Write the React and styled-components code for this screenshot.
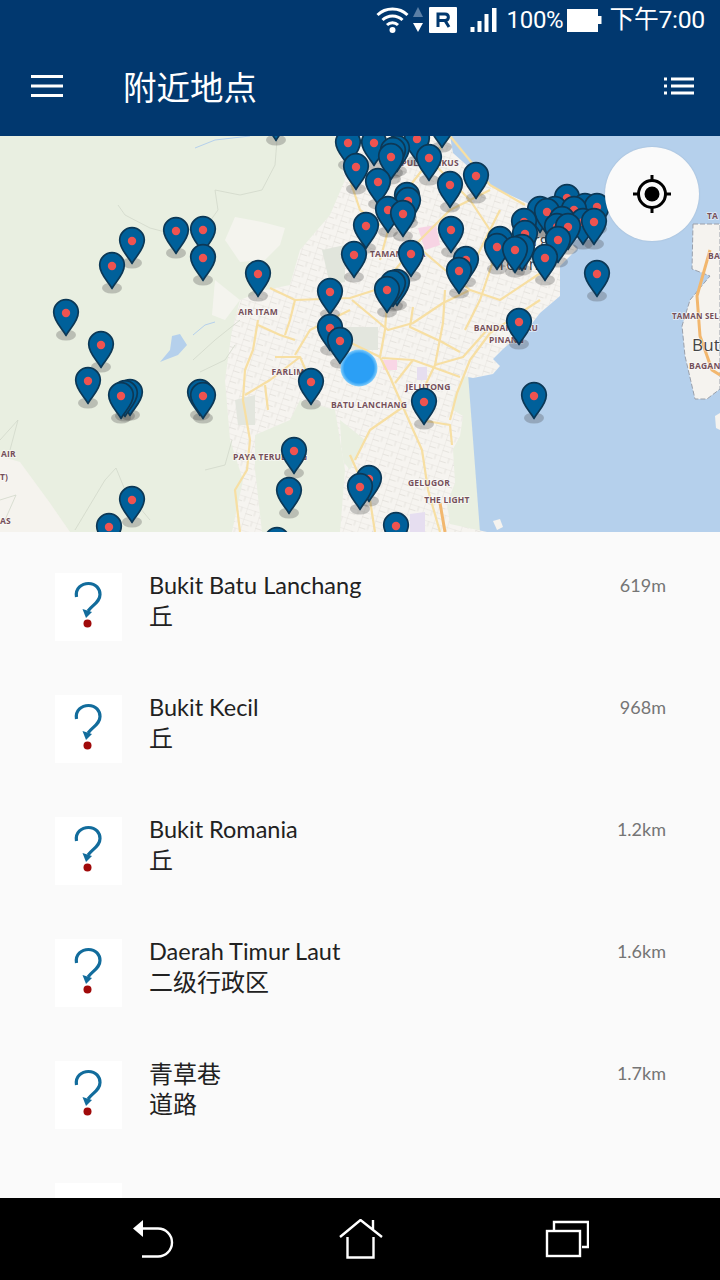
import React from 'react';
import styled, { createGlobalStyle } from 'styled-components';

const GlobalStyle = createGlobalStyle`
  html, body { margin: 0; padding: 0; background: #000; }
  * { box-sizing: border-box; }
`;

const CJK = '"Noto Sans CJK SC", sans-serif';

const Screen = styled.div`
  width: 720px;
  height: 1280px;
  display: flex;
  flex-direction: column;
  overflow: hidden;
  background: #fafafa;
  font-family: Lato, ${CJK};
`;

const Header = styled.header`
  height: 136px;
  background: #01386f;
  color: #fff;
  display: flex;
  flex-direction: column;
`;

const StatusBar = styled.div`
  height: 40px;
  padding: 7px 15px 0 0;
  display: flex;
  justify-content: flex-end;
  align-items: flex-start;
  font-family: Roboto, ${CJK};
  font-size: 24px;
  line-height: 26px;
`;

const StatusText = styled.span`
  margin-left: ${p => p.$gap || 0}px;
  font-size: ${p => p.$size || 24}px;
  letter-spacing: -0.3px;
`;

const StatusIcon = styled.svg`
  display: block;
  flex: none;
  margin-left: ${p => p.$gap || 0}px;
`;

const Toolbar = styled.div`
  flex: 1;
  display: flex;
  align-items: center;
  padding: 0 26px 0 31px;
  margin-top: -5px;
`;

const Title = styled.h1`
  flex: 1;
  margin: 0 0 0 60px;
  font-family: ${CJK};
  font-size: 33.5px;
  font-weight: 400;
  line-height: 40px;
`;

const MapArea = styled.section`
  position: relative;
  height: 396px;
  overflow: hidden;
  background: #b5d0ec;
`;

const MapSvg = styled.svg`
  display: block;
`;

const MapLabel = styled.text`
  font-family: "Open Sans", sans-serif;
  font-size: ${p => p.$size || 8.5}px;
  font-weight: ${p => p.$weight || 700};
  fill: ${p => p.$color || '#75505a'};
  stroke: rgba(255, 255, 255, 0.6);
  stroke-width: 1.5px;
  paint-order: stroke;
  text-anchor: ${p => p.$anchor || 'middle'};
  letter-spacing: 0.2px;
`;

const LocateButton = styled.button`
  position: absolute;
  top: 11px;
  right: 21px;
  width: 94px;
  height: 94px;
  padding: 0;
  border: none;
  border-radius: 50%;
  background: #fafafa;
  box-shadow: 0 0 2px rgba(0, 0, 0, 0.12);
  display: flex;
  align-items: center;
  justify-content: center;
`;

const List = styled.div`
  flex: 1;
  min-height: 0;
  overflow: hidden;
  padding-top: 14px;
`;

const Row = styled.div`
  height: 122px;
  padding: 27px 54px 0 55px;
  display: flex;
  align-items: flex-start;
`;

const Thumb = styled.div`
  width: 67px;
  height: 68px;
  flex: none;
  background: #fff;
`;

const RowText = styled.div`
  flex: 1;
  margin: -2px 0 0 27px;
  color: #212121;
  line-height: 29.5px;
`;

const Line = styled.div`
  height: 29.5px;
  font-size: ${p => (p.$cjk ? 24 : 23.5)}px;
`;

const Distance = styled.div`
  margin-top: -1px;
  color: #757575;
  font-size: 18px;
  line-height: 26px;
`;

const NavBar = styled.nav`
  height: 82px;
  background: #000;
  display: grid;
  grid-template-columns: 133px 41px 165px 43px 163px 44px;
  padding-top: 21px;
  align-items: start;
`;

const NavSlot = styled.svg`
  display: block;
  grid-column: ${p => p.$col};
`;

const head = [
  [276, 118], [442, 125], [417, 139], [348, 143], [374, 143], [393, 151], [397, 149], [391, 157], [429, 158],
  [356, 167], [476, 176], [378, 182], [450, 185], [407, 196], [408, 201], [388, 210], [403, 214], [366, 226],
  [451, 230], [176, 231], [203, 230], [132, 241], [354, 255], [411, 254], [203, 258], [466, 260], [112, 266],
  [459, 271], [258, 274], [397, 283], [393, 284], [387, 290], [330, 292], [66, 313], [519, 322], [330, 328],
  [340, 341], [101, 345], [311, 382], [88, 381], [130, 393], [125, 394], [200, 393], [121, 396], [203, 396],
  [534, 396], [424, 402], [294, 451], [369, 479], [360, 487], [289, 491], [132, 500], [396, 526], [109, 527],
  [277, 541],
  // the cluster over George Town
  [567, 198], [585, 207], [597, 207], [540, 210], [555, 210], [574, 210], [547, 212], [562, 220], [583, 222],
  [594, 222], [524, 222], [557, 227], [568, 227], [525, 234], [558, 240], [500, 240], [497, 247], [522, 248],
  [515, 250], [545, 258], [597, 274],
];

const urban = '335,136 345,180 330,215 300,250 290,285 265,290 240,300 232,330 225,380 230,440 243,480 232,532 262,532 255,470 255,435 290,420 300,400 335,410 340,440 345,470 340,532 487,532 450,524 447,503 455,483 453,449 460,436 463,416 453,410 453,399 463,376 473,378 493,374 500,366 493,359 503,349 530,326 540,313 560,296 560,266 577,249 527,203 490,186 453,153 450,136';
const mainland = '693,224 720,224 720,389 707,399 695,399 685,356 682,326 690,300 710,276 692,269';

const roads = [
  'M270 288 L295 300 L350 298 L375 290', 'M258 320 L253 350 L245 370 L243 400 L250 440 L247 470 L235 490 L240 532',
  'M295 300 L290 320 L285 335', 'M258 325 L280 335 L295 340', 'M295 355 L310 330 L330 320 L350 310',
  'M275 357 L300 357 L310 380', 'M245 395 L270 380 L300 357', 'M265 385 L268 410',
  'M380 260 L395 205 L430 160 L450 136', 'M388 290 L385 330 L380 357 L390 377 L403 407 L422 450 L428 490 L440 532',
  'M352 300 L388 330 L413 323 L443 303 L470 290', 'M413 307 L410 327 L442 342 L460 352',
  'M382 358 L413 360 L460 377', 'M445 290 L443 323 L435 365 L423 390', 'M487 330 L463 357 L435 365',
  'M490 333 L470 360 L457 393 L450 420', 'M413 360 L395 383', 'M490 190 L450 210 L420 240 L395 270',
  'M450 136 L490 185 L525 205', 'M495 255 L480 300 L465 330', 'M540 300 L490 333', 'M420 420 L450 425 L452 445',
  'M345 165 L360 210 L380 225', 'M430 160 L470 200 L500 245', 'M350 455 L370 500 L375 532',
  'M410 240 L445 270 L470 290 L500 300 L545 270', 'M500 210 L480 250 L460 290', 'M345 340 L380 357',
  'M403 407 L370 430 L355 460',
];

const contours = [
  'M277 140 L275 165 L262 190 L240 195 L215 190 L218 210 L205 228 L165 232 L150 228 L125 215 L118 205',
  'M193 360 L215 340 L240 320', 'M200 372 L225 360 L235 345',
  'M0 440 L18 420 L10 450', 'M75 530 L105 480 L116 468 L125 490 L150 520', 'M205 470 L225 465 L232 440',
  'M0 500 L16 495 L5 520',
];

function Pin({ x, y }) {
  return (
    <g transform={`translate(${x} ${y})`}>
      <path
        d="M0 22.5 C-3 16 -12.3 9 -12.3 -1 A12.3 12.3 0 1 1 12.3 -1 C12.3 9 3 16 0 22.5 Z"
        fill="#00609a"
        stroke="#0c3856"
        strokeWidth="1.7"
        strokeLinejoin="round"
      />
      <circle r="4.2" fill="#ef5350" />
    </g>
  );
}

function MapDrawing() {
  const sorted = [...head].sort((a, b) => a[1] - b[1]);
  return (
    <MapSvg width="720" height="396" viewBox="0 136 720 396">
      <defs>
        <radialGradient id="me">
          <stop offset="0.8" stopColor="#2b9ff5" />
          <stop offset="1" stopColor="#83cdfb" />
        </radialGradient>
        <pattern id="streets" width="14" height="11" patternUnits="userSpaceOnUse" patternTransform="rotate(18)">
          <path d="M0 0 H14 M0 5.5 H7 M0 0 V11 M9 0 V5.5" stroke="#dfdcd7" strokeWidth="0.7" fill="none" />
        </pattern>
        <clipPath id="island"><polygon points={urban} /></clipPath>
        <filter id="soft"><feGaussianBlur stdDeviation="0.45" /></filter>
      </defs>

      <rect x="0" y="136" width="720" height="396" fill="#b5d0ec" />
      <g filter="url(#soft)">
        <polygon points="0,136 450,136 480,532 0,532" fill="#e9efe1" />
        <polygon points="0,456 20,462 50,503 70,532 0,532" fill="#f5f3ee" />
        <polygon points="235,217 262,222 285,228 280,245 265,260 240,262 225,240" fill="#f4f4ee" />
        <polygon points="215,280 240,300 225,320 212,315" fill="#f4f4ee" />
        <polygon points={urban} fill="#f6f4f0" />
        <polygon points={mainland} fill="#f5f3ef" stroke="#9aa0ab" strokeWidth="1" strokeDasharray="5 2" />
        <polygon points="715,416 720,413 720,430 716,428" fill="#f5f3ef" />
        <polygon points="493,521 500,519 503,527 497,530" fill="#f5f3ef" />

        <g clipPath="url(#island)">
          <rect x="220" y="136" width="360" height="396" fill="url(#streets)" />
          <polygon points="322,250 345,245 345,282 330,285" fill="#e1e5dc" />
          <polygon points="345,327 378,327 378,350 345,350" fill="#e3e6de" />
          <polygon points="235,400 255,395 255,425 238,425" fill="#e3e6de" />
          <polygon points="340,420 365,440 350,470 342,460" fill="#e9efe1" />
        </g>
        <polygon points="418,228 436,225 440,245 425,250" fill="#f7d4e4" />
        <polygon points="383,360 397,360 397,370 383,370" fill="#f9d6e6" />
        <polygon points="417,367 427,367 427,380 417,380" fill="#e6def0" />
        <polygon points="410,514 425,512 425,532 410,532" fill="#e6def0" />
        <polygon points="160,362 170,350 172,336 180,334 187,345 178,355 165,360" fill="#b5d0ec" />
        <path d="M195 148 L215 140 L250 136 M193 335 L205 325 L215 322" stroke="#b5d0ec" strokeWidth="1" fill="none" />

        {contours.map(d => <path key={d} d={d} stroke="#d2d8ca" strokeWidth="0.8" fill="none" />)}
        {roads.map(d => <path key={d} d={d} stroke="#f7dfa3" strokeWidth="2.2" fill="none" strokeLinejoin="round" />)}
        <path d="M710 250 L697 296 L700 336 L712 370 L720 375" stroke="#f2b76e" strokeWidth="3" fill="none" />
        <path d="M440 503 L445 532" stroke="#f2b76e" strokeWidth="3" fill="none" />
      </g>

      <MapLabel x="258" y="315">AIR ITAM</MapLabel>
      <MapLabel x="288" y="375">FARLIM</MapLabel>
      <MapLabel x="369" y="408">BATU LANCHANG</MapLabel>
      <MapLabel x="233" y="460" $anchor="start">PAYA TERUBONG</MapLabel>
      <MapLabel x="428" y="390">JELUTONG</MapLabel>
      <MapLabel x="429" y="486">GELUGOR</MapLabel>
      <MapLabel x="447" y="503">THE LIGHT</MapLabel>
      <MapLabel x="506" y="331">BANDAR BARU</MapLabel>
      <MapLabel x="489" y="343" $anchor="start">PINANG</MapLabel>
      <MapLabel x="430" y="166">PULAU TIKUS</MapLabel>
      <MapLabel x="370" y="257" $anchor="start">TAMAN JAYA</MapLabel>
      <MapLabel x="672" y="319" $anchor="start" $size={8}>TAMAN SEL</MapLabel>
      <MapLabel x="689" y="369" $anchor="start">BAGAN</MapLabel>
      <MapLabel x="707" y="219" $anchor="start">TA</MapLabel>
      <MapLabel x="708" y="259" $anchor="start">BA</MapLabel>
      <MapLabel x="1" y="457" $anchor="start">AIR</MapLabel>
      <MapLabel x="0" y="480" $anchor="start">T)</MapLabel>
      <MapLabel x="0" y="524" $anchor="start">AS</MapLabel>
      <MapLabel x="692" y="351" $anchor="start" $size={17} $weight={400} $color="#454545">But</MapLabel>
      <MapLabel x="530" y="246" $size={16} $weight={400} $color="#454545">George</MapLabel>
      <MapLabel x="518" y="270" $size={16} $weight={400} $color="#454545">Town</MapLabel>

      {sorted.map(([x, y]) => (
        <ellipse key={`s${x}-${y}`} cx={x} cy={y + 22} rx="10" ry="5.5" fill="rgba(60, 60, 60, 0.27)" />
      ))}
      <circle cx="359" cy="368" r="18.5" fill="url(#me)" />
      {sorted.map(([x, y]) => <Pin key={`${x}-${y}`} x={x} y={y} />)}
    </MapSvg>
  );
}

function QuestionIcon() {
  return (
    <svg width="67" height="68" viewBox="0 0 67 68">
      <path d="M21.5 24 C20 15 27 10.5 33.5 10.5 C41 10.5 45 16 45 21.5 C45 29 38 31.5 33 38" fill="none" stroke="#126c9c" strokeWidth="3.2" />
      <path d="M27.5 36 L37 39 L31 45 Z" fill="#126c9c" />
      <circle cx="32.5" cy="50.5" r="4" fill="#a00a0a" />
    </svg>
  );
}

const places = [
  { name: 'Bukit Batu Lanchang', kind: '丘', dist: '619m' },
  { name: 'Bukit Kecil', kind: '丘', dist: '968m' },
  { name: 'Bukit Romania', kind: '丘', dist: '1.2km' },
  { name: 'Daerah Timur Laut', kind: '二级行政区', dist: '1.6km' },
  { name: '青草巷', cjk: true, kind: '道路', dist: '1.7km' },
];

export default function App() {
  return (
    <Screen>
      <GlobalStyle />
      <Header>
        <StatusBar>
          <StatusIcon width="48" height="26" viewBox="0 0 48 26">
            <g fill="none" stroke="#fff" strokeWidth="3">
              <path d="M1.5 8 C9.5 0 23.5 0 31.5 8" />
              <path d="M6.5 13 C12 7.5 21 7.5 26.5 13" />
              <path d="M11 18 C14 15 19 15 22 18" />
            </g>
            <circle cx="16.5" cy="23" r="3" fill="#fff" />
            <path d="M42 0 L47 10 H37 Z" fill="#5b7fa6" />
            <path d="M37 16 H47 L42 25 Z" fill="#fff" />
          </StatusIcon>
          <StatusIcon $gap={5} width="28" height="26" viewBox="0 0 28 26">
            <rect width="28" height="26" rx="1" fill="#fff" />
            <path d="M9 20 V7 H16 C20.5 7 20.5 13.5 16 13.5 L20 20 M9 13.5 H16" fill="none" stroke="#01386f" strokeWidth="3" />
          </StatusIcon>
          <StatusIcon $gap={13} width="27" height="26" viewBox="0 0 27 26">
            <rect x="0.5" y="20" width="4" height="5" fill="#fff" />
            <rect x="7.5" y="14" width="4" height="11" fill="#fff" />
            <rect x="14.5" y="7" width="4" height="18" fill="#fff" />
            <rect x="22" y="1" width="4.5" height="24" fill="#fff" />
          </StatusIcon>
          <StatusText $gap={10}>100%</StatusText>
          <StatusIcon $gap={4} width="35" height="26" viewBox="0 0 35 26">
            <rect x="0" y="2" width="31" height="23" fill="#fff" />
            <rect x="31" y="9" width="3.5" height="8" fill="#fff" />
          </StatusIcon>
          <StatusText $gap={7} $size={24.8}>下午7:00</StatusText>
        </StatusBar>
        <Toolbar>
          <svg width="32" height="24" viewBox="0 0 32 24">
            <path d="M0 2.5 H32 M0 12 H32 M0 21.5 H32" stroke="#fff" strokeWidth="3" />
          </svg>
          <Title>附近地点</Title>
          <svg width="30" height="18" viewBox="0 0 30 18">
            <path d="M0 2 H3 M7 2 H30 M0 9 H3 M7 9 H30 M0 16 H3 M7 16 H30" stroke="#fff" strokeWidth="3" />
          </svg>
        </Toolbar>
      </Header>

      <MapArea>
        <MapDrawing />
        <LocateButton aria-label="locate">
          <svg width="40" height="40" viewBox="0 0 40 40">
            <circle cx="20" cy="20" r="13.5" fill="none" stroke="#000" strokeWidth="3" />
            <circle cx="20" cy="20" r="7.5" fill="#000" />
            <path d="M20 1 V8 M20 32 V39 M1 20 H8 M32 20 H39" stroke="#000" strokeWidth="3" />
          </svg>
        </LocateButton>
      </MapArea>

      <List>
        {places.map(p => (
          <Row key={p.name}>
            <Thumb><QuestionIcon /></Thumb>
            <RowText>
              <Line $cjk={p.cjk}>{p.name}</Line>
              <Line $cjk>{p.kind}</Line>
            </RowText>
            <Distance>{p.dist}</Distance>
          </Row>
        ))}
        <Row><Thumb /></Row>
      </List>

      <NavBar>
        <NavSlot $col={2} width="41" height="40" viewBox="0 0 41 40">
          <path d="M10 1 V18 L0 9.5 Z" fill="#fff" />
          <path d="M9 9.5 H25 A14 14 0 0 1 25 37.5 H9" fill="none" stroke="#fff" strokeWidth="2.4" />
        </NavSlot>
        <NavSlot $col={4} width="44" height="40" viewBox="0 0 44 40">
          <path d="M1 18 L21.5 1 L43 18 M34 1 V11 M8.5 18 V38.5 H34.5 V18" fill="none" stroke="#fff" strokeWidth="2.4" />
        </NavSlot>
        <NavSlot $col={6} width="44" height="40" viewBox="0 0 44 40">
          <rect x="2" y="12" width="33" height="25" fill="none" stroke="#fff" strokeWidth="2.4" />
          <path d="M9 11 V3 H43 V28 H37" fill="none" stroke="#fff" strokeWidth="2.4" />
        </NavSlot>
      </NavBar>
    </Screen>
  );
}
